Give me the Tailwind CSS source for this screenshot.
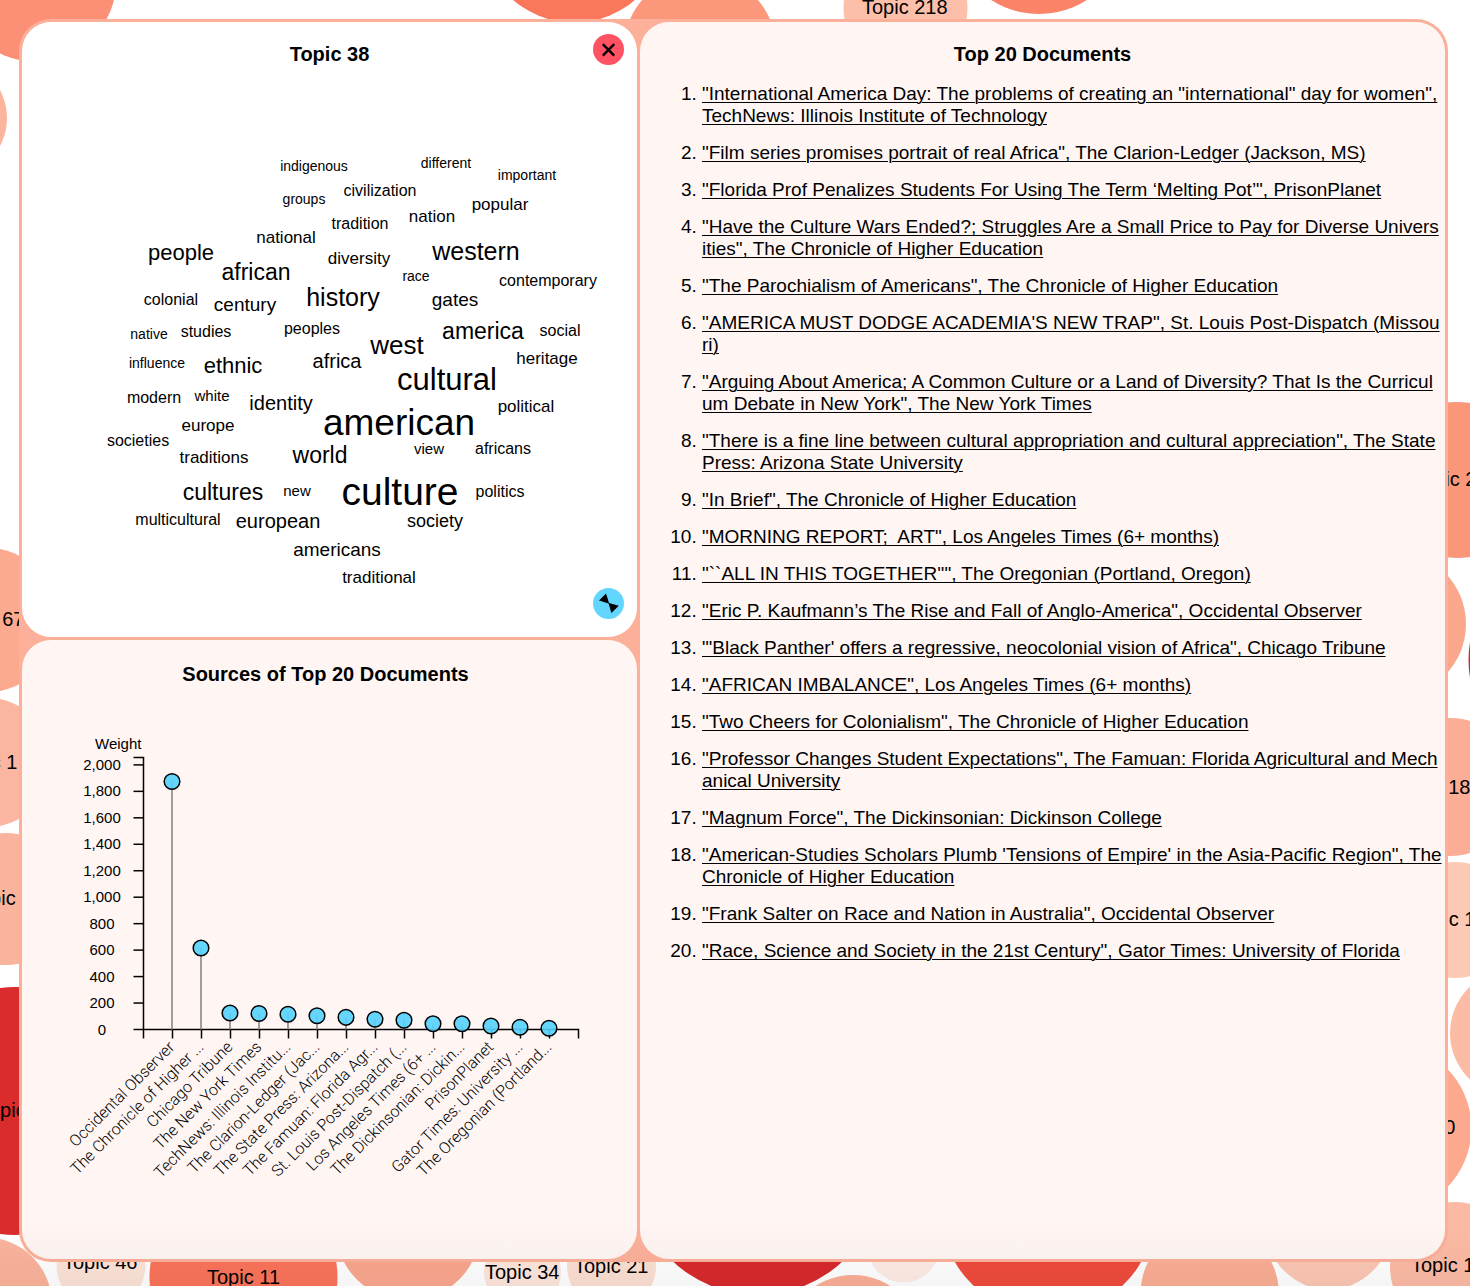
<!DOCTYPE html>
<html lang="en">
<head>
<meta charset="utf-8">
<meta name="viewport" content="width=device-width, initial-scale=1">
<title>Topic 38</title>
<script src="https://cdn.jsdelivr.net/npm/@tailwindcss/browser@4"></script>
</head>
<body class="relative min-h-screen overflow-x-hidden bg-white text-black font-['Liberation_Sans',Arial,sans-serif]">

<!-- Topic bubbles behind the dialog -->
<svg class="absolute inset-0 size-full" aria-hidden="true">
  <g>
    <circle cx="35" cy="-20" r="81.5" fill="#fb9077"/>
    <circle cx="-52.5" cy="118" r="59.5" fill="#fcb49c"/>
    <circle cx="574" cy="-71" r="93.6" fill="#fb775b"/>
    <circle cx="700" cy="50" r="76.5" fill="#fb987c"/>
    <circle cx="905.5" cy="8" r="62" fill="#fcbfaa"/>
    <circle cx="1039" cy="-75" r="89" fill="#fb8367"/>
    <circle cx="1457" cy="480" r="78" fill="#fb9779"/>
    <circle cx="1393" cy="624" r="73" fill="#fba78c"/>
    <circle cx="1577.5" cy="660" r="109" fill="#cb2a2c"/>
    <circle cx="1450" cy="787" r="69" fill="#fbad95"/>
    <circle cx="1456" cy="920" r="58" fill="#fcc9b5"/>
    <circle cx="1514" cy="1033" r="64" fill="#fcbba5"/>
    <circle cx="1387" cy="1128" r="84.5" fill="#fca98f"/>
    <circle cx="1455" cy="1267" r="65" fill="#fcbaa4"/>
    <circle cx="101" cy="1265" r="44.5" fill="#fde3d7"/>
    <circle cx="243.5" cy="1277" r="94" fill="#fb745a"/>
    <circle cx="408" cy="1228" r="72.6" fill="#faa78e"/>
    <circle cx="522.5" cy="1272" r="38.5" fill="#fee6dc"/>
    <circle cx="611.5" cy="1266" r="44.5" fill="#fcdfd2"/>
    <circle cx="757.7" cy="1171" r="124" fill="#d8292c"/>
    <circle cx="903.5" cy="1246" r="36.4" fill="#feece5"/>
    <circle cx="853" cy="1344" r="69" fill="#fbae96"/>
    <circle cx="1048" cy="1207.5" r="108" fill="#ef4b3c"/>
    <circle cx="1209.7" cy="1293" r="69" fill="#fbad94"/>
    <circle cx="1328.5" cy="1227" r="62.4" fill="#fbc7b3"/>
    <circle cx="-15" cy="1304.3" r="67" fill="#fbb39c"/>
    <circle cx="15" cy="1111" r="124" fill="#da2b2d"/>
    <circle cx="-13.7" cy="620" r="72.3" fill="#fba98f"/>
    <circle cx="-12.8" cy="762.5" r="64.8" fill="#fab6a0"/>
    <circle cx="6" cy="899" r="66" fill="#fab49d"/>
  </g>
  <g class="text-[20px]">
    <text x="862" y="14">Topic 218</text>
    <text x="1413" y="486">Topic 2</text>
    <text x="1396" y="794">Topic 18</text>
    <text x="1412" y="926">Topic 1</text>
    <text x="1381" y="1134">Topic 30</text>
    <text x="1411" y="1272">Topic 1</text>
    <text x="63" y="1269">Topic 46</text>
    <text x="207" y="1284">Topic 11</text>
    <text x="485" y="1279">Topic 34</text>
    <text x="574" y="1273">Topic 21</text>
    <text x="-21" y="1117">Topic</text>
    <text x="-50" y="626">Topic 67</text>
    <text x="-46" y="769">Topic 1</text>
    <text x="-31" y="905">Topic</text>
  </g>
</svg>

<main class="relative pt-[19px] pr-[22px] pb-6 pl-[19px]">
  <div class="grid grid-cols-[615fr_805fr] grid-rows-[auto_auto] gap-[3px] rounded-[32px] bg-[#fcb09a] p-[3px]">

    <section class="relative rounded-[29px] bg-white pt-5" aria-labelledby="topic-title">
      <h2 id="topic-title" class="text-center text-xl leading-6 font-bold">Topic 38</h2>
      <svg class="block h-auto w-full" viewBox="22 66 615 571" role="img" aria-label="Word cloud for topic 38">
        <g id="cloud" text-anchor="middle"></g>
      </svg>
      <button type="button" aria-label="Close" class="absolute top-[12px] right-[13px] size-[31px] rounded-full bg-[#ff5263]">
        <svg class="size-full" viewBox="0 0 31 31"><path d="M9.8 10.2 21.2 21.6M21.2 10.2 9.8 21.6" stroke="#000" stroke-width="2.4" fill="none"/></svg>
      </button>
      <button type="button" aria-label="Resize" class="absolute right-[13px] bottom-[18px] size-[31px] rounded-full bg-[#62d6ff]">
        <svg class="size-full" viewBox="0 0 31 31"><path d="M13 5.4 6 12.6 15.6 15.4 18.4 25 25.8 17.8 16 15Z"/></svg>
      </button>
    </section>

    <section class="row-span-2 rounded-[29px] bg-[#fff6f4] pt-5" aria-labelledby="docs-title">
      <h2 id="docs-title" class="text-center text-xl leading-6 font-bold">Top 20 Documents</h2>
      <ol class="mt-[17px] flex list-decimal flex-col gap-[15px] pl-[62px] text-[19px] leading-[22px] whitespace-nowrap [&_a]:underline [&_a]:decoration-1 [&_a]:underline-offset-2">
        <li><a href="#">"International America Day: The problems of creating an "international" day for women",<br>TechNews: Illinois Institute of Technology</a></li>
        <li><a href="#">"Film series promises portrait of real Africa", The Clarion-Ledger (Jackson, MS)</a></li>
        <li><a href="#">"Florida Prof Penalizes Students For Using The Term ‘Melting Pot’", PrisonPlanet</a></li>
        <li><a href="#">"Have the Culture Wars Ended?; Struggles Are a Small Price to Pay for Diverse Univers<br>ities", The Chronicle of Higher Education</a></li>
        <li><a href="#">"The Parochialism of Americans", The Chronicle of Higher Education</a></li>
        <li><a href="#">"AMERICA MUST DODGE ACADEMIA'S NEW TRAP", St. Louis Post-Dispatch (Missou<br>ri)</a></li>
        <li><a href="#">"Arguing About America; A Common Culture or a Land of Diversity? That Is the Curricul<br>um Debate in New York", The New York Times</a></li>
        <li><a href="#">"There is a fine line between cultural appropriation and cultural appreciation", The State<br>Press: Arizona State University</a></li>
        <li><a href="#">"In Brief", The Chronicle of Higher Education</a></li>
        <li><a href="#">"MORNING REPORT;&nbsp; ART", Los Angeles Times (6+ months)</a></li>
        <li><a href="#">"``ALL IN THIS TOGETHER''", The Oregonian (Portland, Oregon)</a></li>
        <li><a href="#">"Eric P. Kaufmann’s The Rise and Fall of Anglo-America", Occidental Observer</a></li>
        <li><a href="#">"'Black Panther' offers a regressive, neocolonial vision of Africa", Chicago Tribune</a></li>
        <li><a href="#">"AFRICAN IMBALANCE", Los Angeles Times (6+ months)</a></li>
        <li><a href="#">"Two Cheers for Colonialism", The Chronicle of Higher Education</a></li>
        <li><a href="#">"Professor Changes Student Expectations", The Famuan: Florida Agricultural and Mech<br>anical University</a></li>
        <li><a href="#">"Magnum Force", The Dickinsonian: Dickinson College</a></li>
        <li><a href="#">"American-Studies Scholars Plumb 'Tensions of Empire' in the Asia-Pacific Region", The<br>Chronicle of Higher Education</a></li>
        <li><a href="#">"Frank Salter on Race and Nation in Australia", Occidental Observer</a></li>
        <li><a href="#">"Race, Science and Society in the 21st Century", Gator Times: University of Florida</a></li>
      </ol>
    </section>

    <section class="rounded-[29px] bg-[#fff6f4] pt-[22px]" aria-labelledby="sources-title">
      <h2 id="sources-title" class="pr-2 text-center text-xl leading-6 font-bold">Sources of Top 20 Documents</h2>
      <svg class="block h-auto w-full" viewBox="22 686 615 573" role="img" aria-label="Weight by source">
        <text x="95" y="749" class="text-[15px]">Weight</text>
        <g id="y-axis" class="text-[15px]" text-anchor="middle"></g>
        <g id="x-axis" class="font-['Roboto',sans-serif] text-[16px] font-light" text-anchor="end"></g>
        <path d="M133.5 757.5H143.5V1029.5H578.5V1038.5M143.5 1029.5V1038.5" fill="none" stroke="#000" stroke-width="1.5"/>
        <g id="points"></g>
      </svg>
    </section>
  </div>
</main>

<div class="pointer-events-none absolute inset-x-0 bottom-0 h-16 bg-linear-to-b from-black/0 to-black/4"></div>

<script>
const NS = 'http://www.w3.org/2000/svg';
function add(parent, tag, attrs, text) {
  const el = document.createElementNS(NS, tag);
  for (const k in attrs) el.setAttribute(k, attrs[k]);
  if (text) el.textContent = text;
  document.getElementById(parent).appendChild(el);
}

// word, centre x, baseline y, size
const words = [
  ['indigenous', 314, 171, 14], ['different', 446, 168, 14], ['important', 527, 180, 14],
  ['civilization', 380, 196, 16], ['groups', 304, 204, 14], ['popular', 500, 210, 17],
  ['tradition', 360, 229, 16], ['nation', 432, 222, 17], ['national', 286, 243, 17],
  ['people', 181, 260, 22], ['western', 476, 260, 25], ['diversity', 359, 264, 17],
  ['african', 256, 280, 23], ['race', 416, 281, 14], ['contemporary', 548, 286, 16],
  ['history', 343, 306, 25], ['gates', 455, 306, 19], ['colonial', 171, 305, 16],
  ['century', 245, 311, 19], ['native', 149, 339, 14], ['studies', 206, 337, 16],
  ['peoples', 312, 334, 16], ['america', 483, 339, 23], ['social', 560, 336, 16],
  ['west', 397, 354, 26], ['influence', 157, 368, 14], ['ethnic', 233, 373, 22],
  ['africa', 337, 368, 20], ['heritage', 547, 364, 17], ['cultural', 447, 390, 31],
  ['modern', 154, 403, 16], ['white', 212, 401, 15], ['identity', 281, 410, 20],
  ['american', 399, 435, 37], ['political', 526, 412, 17], ['europe', 208, 431, 17],
  ['societies', 138, 446, 16], ['traditions', 214, 463, 17], ['world', 320, 463, 23],
  ['view', 429, 454, 15], ['africans', 503, 454, 16], ['cultures', 223, 500, 23],
  ['new', 297, 496, 15], ['culture', 400, 505, 39], ['politics', 500, 497, 16],
  ['multicultural', 178, 525, 16], ['european', 278, 528, 20], ['society', 435, 527, 18],
  ['americans', 337, 556, 19], ['traditional', 379, 583, 17],
];
for (const [w, x, y, size] of words) add('cloud', 'text', { x, y, 'font-size': size }, w);

for (let v = 0; v <= 2000; v += 200) {
  const y = 1029.5 - v * 0.1323;
  add('y-axis', 'path', { d: `M133.5 ${y}H143.5`, stroke: '#000', 'stroke-width': 1.5 });
  add('y-axis', 'text', { x: 102, y: Math.round(y + 5) }, v.toLocaleString('en-US'));
}

const sources = [
  ['Occidental Observer', 1874], ['The Chronicle of Higher ...', 616], ['Chicago Tribune', 125],
  ['The New York Times', 121], ['TechNews: Illinois Institu...', 115], ['The Clarion-Ledger (Jac...', 104],
  ['The State Press: Arizona...', 92], ['The Famuan: Florida Agr...', 77], ['St. Louis Post-Dispatch (...', 70],
  ['Los Angeles Times (6+ ...', 44], ['The Dickinsonian: Dickin...', 44], ['PrisonPlanet', 27],
  ['Gator Times: University ...', 17], ['The Oregonian (Portland...', 10],
];
sources.forEach(([name, v], i) => {
  const x = 143.5 + 29 * (i + 1), y = 1029.5 - v * 0.1323;
  add('x-axis', 'path', { d: `M${x} 1029.5V1038.5`, stroke: '#000', 'stroke-width': 1.5 });
  add('x-axis', 'text', { transform: `translate(${x + 3} 1048) rotate(-45)` }, name);
  add('points', 'path', { d: `M${x - 0.5} ${y}V1029.5`, stroke: '#808080', 'stroke-width': 1.5 });
  add('points', 'circle', { cx: x - 0.5, cy: y, r: 7.8, fill: '#54d2fc', 'fill-opacity': 0.9, stroke: '#000', 'stroke-width': 1.5 });
});
</script>
</body>
</html>
